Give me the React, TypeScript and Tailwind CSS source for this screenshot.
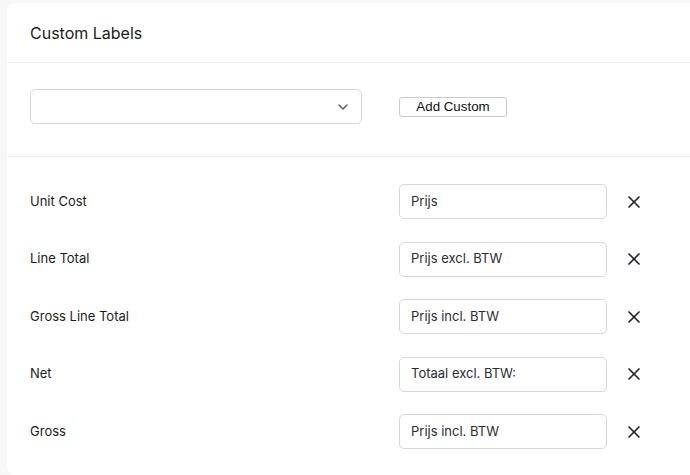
import { X, ChevronDown } from "lucide-react";

const labels = [
  { name: "Unit Cost", value: "Prijs" },
  { name: "Line Total", value: "Prijs excl. BTW" },
  { name: "Gross Line Total", value: "Prijs incl. BTW" },
  { name: "Net", value: "Totaal excl. BTW:" },
  { name: "Gross", value: "Prijs incl. BTW" },
];

export default function App() {
  return (
    <div
      className="h-[475px] w-full overflow-hidden bg-[#f7f7f7] pl-[7px] pt-[3px] text-[#1f2328]"
      style={{ fontFamily: "Inter, 'Noto Sans', sans-serif" }}
    >
      <div className="w-[720px] rounded-lg bg-white">
        <div className="flex h-[60px] items-center border-b border-[#f0f0f0] px-[23px]">
          <h2 className="text-[16px] font-normal text-[#1a1d21]">Custom Labels</h2>
        </div>

        <div className="flex items-center border-b border-[#f0f0f0] px-[23px] pt-[26px] pb-[32px]">
          <div className="flex h-[35px] w-[332px] items-center justify-end rounded-[5px] border border-[#d4d7de] pr-[10px]">
            <ChevronDown className="h-4 w-4 text-[#55595f]" strokeWidth={2} />
          </div>
          <button
            className="ml-[37px] h-[20px] w-[108px] rounded-[3px] border border-[#c9ccd3] bg-white text-[13.33px] leading-none text-[#111]"
            style={{ fontFamily: "'Liberation Sans', Arial, sans-serif" }}
          >
            Add Custom
          </button>
        </div>

        <div className="flex flex-col gap-[22.5px] px-[23px] pt-[27px] pb-[26px]">
          {labels.map((l) => (
            <div key={l.name} className="flex items-center">
              <span className="w-[369px] text-[13px] text-[#1a1d21]">{l.name}</span>
              <div className="flex h-[35px] w-[208px] items-center rounded-[5px] border border-[#d4d7de] px-[11px] text-[13px] text-[#2a2d31]">
                {l.value}
              </div>
              <X className="ml-[17px] h-[20px] w-[20px] text-[#1f2328]" strokeWidth={2} />
            </div>
          ))}
        </div>
      </div>
    </div>
  );
}
